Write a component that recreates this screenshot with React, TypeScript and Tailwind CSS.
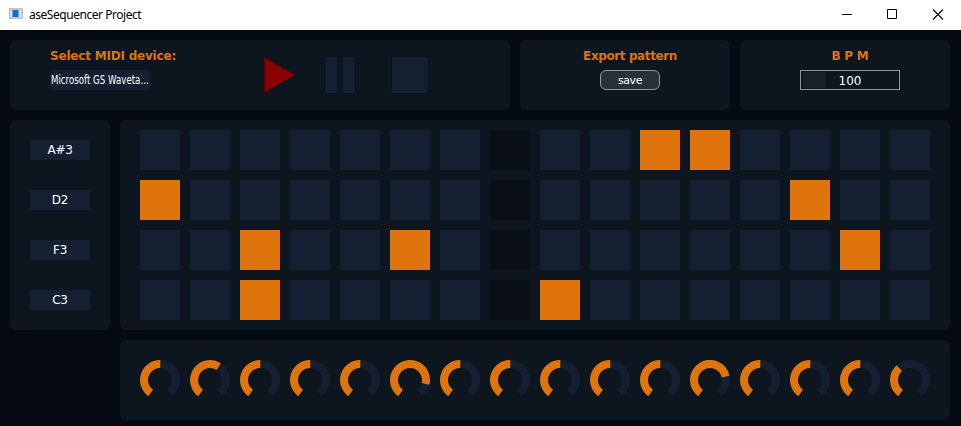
import React from 'react';

const NOTES = ['A#3', 'D2', 'F3', 'C3'];
const ACTIVE = [[10, 11], [0, 13], [2, 5, 14], [2, 8]];
const PLAYHEAD = 7;
const KNOBS = [1, 33, 1, 1, 1, 104, 1, 1, 1, 1, 1, 78, 1, 1, 1, -42];

const polar = (deg: number) => {
  const a = (deg * Math.PI) / 180;
  return `${(20 + 16 * Math.sin(a)).toFixed(2)} ${(20 - 16 * Math.cos(a)).toFixed(2)}`;
};

const arc = (from: number, to: number) =>
  `M${polar(from)}A16 16 0 ${to - from > 180 ? 1 : 0} 1 ${polar(to)}`;

function Knob({ angle }: { angle: number }) {
  return (
    <svg width="40" height="40" viewBox="0 0 40 40" fill="none" strokeWidth="8">
      <path d={arc(-144, 144)} stroke="#151f32" />
      <path d={arc(-144, angle)} stroke="#df740c" />
    </svg>
  );
}

function Panel({ className, children }: { className: string; children: React.ReactNode }) {
  return <section className={`shrink-0 rounded-[6px] bg-[#0d151f] ${className}`}>{children}</section>;
}

function TitleBar() {
  return (
    <header className="flex h-[30px] items-center bg-white pl-[9px] text-black">
      <svg width="14" height="12" viewBox="0 0 14 12" className="-mt-[2px]" shapeRendering="crispEdges">
        <path fill="#c6c6c6" d="M0 0h14v11H0z" />
        <path fill="#e4e4e4" d="M1 2h2v7H1zM10 2h2v7h-2z" />
        <path fill="#9b9b9b" d="M0 1h1v1H0zM0 3h1v1H0zM0 5h1v1H0zM0 7h1v1H0zM0 9h1v1H0z" />
        <path fill="#5aa5e2" d="M3 2h7v7H3z" />
        <path fill="#0078d7" d="M4 2h5v7H4z" />
      </svg>
      <h1 className="ml-[6px] font-['Noto_Sans',sans-serif] text-[12px] leading-[30px] tracking-[-0.46px]">
        aseSequencer Project
      </h1>
      <svg width="102" height="11" viewBox="0 0 102 11" className="mr-[17px] -mt-[2px] ml-auto" fill="none" stroke="#000">
        <path d="M0 5.5h10M45.5.5h9v9h-9z" />
        <path d="M91 .5l10 10M101 .5l-10 10" strokeWidth="1.1" />
      </svg>
    </header>
  );
}

export default function App() {
  return (
    <div className="h-[426px] w-[961px] overflow-hidden bg-[#060a12] font-['DejaVu_Sans',sans-serif] text-white">
      <TitleBar />
      <main className="flex flex-col gap-[10px] p-[10px]">
        <div className="flex gap-[10px]">
          <Panel className="flex h-[70px] w-[500px]">
            <div className="w-[212px] pl-[40px]">
              <h2 className="h-[30px] text-[12px] leading-[32px] font-bold tracking-[-0.2px] whitespace-nowrap text-[#df740c]">
                Select MIDI device:
              </h2>
              <div className="h-[20px] w-[100px] bg-[#151f32] pl-px text-[12px] leading-[20px] whitespace-nowrap">
                <span className="inline-block origin-left scale-x-[0.72]">Microsoft GS Waveta...</span>
              </div>
            </div>
            <svg width="220" height="70" viewBox="222 40 220 70">
              <path fill="#8b0000" stroke="#3c080e" strokeWidth="0.8" d="M264.3 57.2v35.8l31-18z" />
              <path
                fill="#151f32"
                stroke="#0a111a"
                d="M324.5 56.5h13v37h-13zM342.5 56.5h13v37h-13zM391.5 56.5h37v37h-37z"
              />
            </svg>
          </Panel>
          <Panel className="flex h-[70px] w-[210px] flex-col items-center pl-[10px]">
            <h2 className="h-[30px] text-[12px] leading-[32px] font-bold tracking-[-0.4px] whitespace-nowrap text-[#df740c]">
              Export pattern
            </h2>
            <button className="h-[20px] w-[60px] rounded-[6px] border border-[#8e989b] bg-[#263238] pt-px text-[11px] leading-[18px] tracking-[-0.4px]">
              save
            </button>
          </Panel>
          <Panel className="flex h-[70px] w-[210px] flex-col items-center pl-[10px]">
            <h2 className="h-[30px] text-[12px] leading-[32px] font-bold tracking-[-0.2px] whitespace-nowrap text-[#df740c]">
              B P M
            </h2>
            <div className="flex h-[20px] w-[100px] border border-[#8e989b] p-px">
              <div className="w-[24px] bg-[#172022]" />
              <div className="-ml-[24px] flex-1 text-center text-[12px] leading-[18px]">100</div>
            </div>
          </Panel>
        </div>
        <div className="flex gap-[10px]">
          <Panel className="flex h-[210px] w-[100px] flex-col items-center gap-[30px] pt-[20px]">
            {NOTES.map((note) => (
              <div
                key={note}
                className="h-[20px] w-[60px] bg-[#151f32] text-center text-[12px] leading-[20px] tracking-[-0.3px]"
              >
                {note}
              </div>
            ))}
          </Panel>
          <Panel className="grid h-[210px] w-[830px] grid-cols-[repeat(16,40px)] content-start gap-[10px] px-[20px] pt-[10px]">
            {NOTES.flatMap((note, row) =>
              Array.from({ length: 16 }, (_, col) => (
                <div
                  key={`${note}-${col}`}
                  className={`h-[40px] ${
                    ACTIVE[row].includes(col) ? 'bg-[#df740c]' : col === PLAYHEAD ? 'bg-[#0a0e17]' : 'bg-[#151f32]'
                  }`}
                />
              )),
            )}
          </Panel>
        </div>
        <Panel className="ml-[110px] flex h-[80px] w-[830px] gap-[10px] px-[20px] pt-[20px]">
          {KNOBS.map((angle, i) => (
            <Knob key={i} angle={angle} />
          ))}
        </Panel>
      </main>
    </div>
  );
}
